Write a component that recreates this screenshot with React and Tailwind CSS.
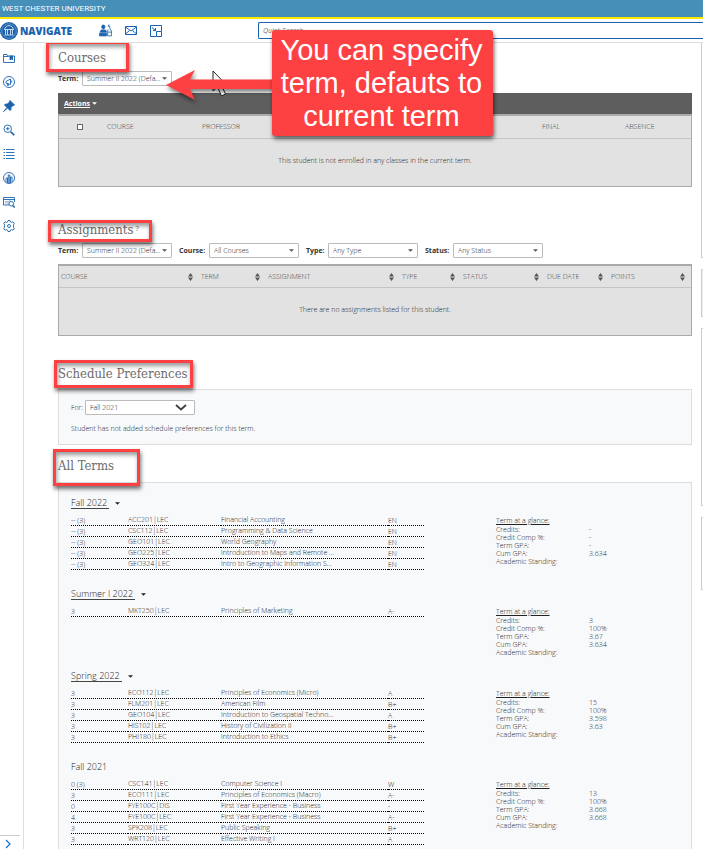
import React from 'react';
import clsx from 'clsx';

const terms = [
    {
        name: 'Fall 2022',
        menu: true,
        rows: [
            ['-- (3)', 'ACC201|LEC', 'Financial Accounting', 'EN'],
            ['-- (3)', 'CSC112|LEC', 'Programming & Data Science', 'EN'],
            ['-- (3)', 'GEO101|LEC', 'World Geography', 'EN'],
            ['-- (3)', 'GEO225|LEC', 'Introduction to Maps and Remote ...', 'EN'],
            ['-- (3)', 'GEO324|LEC', 'Intro to Geographic Information S...', 'EN'],
        ],
        glance: ['-', '-', '-', '3.634', ''],
    },
    {
        name: 'Summer I 2022',
        menu: true,
        rows: [['3', 'MKT250|LEC', 'Principles of Marketing', 'A-']],
        glance: ['3', '100%', '3.67', '3.634', ''],
    },
    {
        name: 'Spring 2022',
        menu: true,
        rows: [
            ['3', 'ECO112|LEC', 'Principles of Economics (Micro)', 'A'],
            ['3', 'FLM201|LEC', 'American Film', 'B+'],
            ['3', 'GEO104|LEC', 'Introduction to Geospatial Techno...', 'A'],
            ['3', 'HIS102|LEC', 'History of Civilization II', 'B+'],
            ['3', 'PHI180|LEC', 'Introduction to Ethics', 'B+'],
        ],
        glance: ['15', '100%', '3.598', '3.63', ''],
    },
    {
        name: 'Fall 2021',
        menu: false,
        rows: [
            ['0 (3)', 'CSC141|LEC', 'Computer Science I', 'W'],
            ['3', 'ECO111|LEC', 'Principles of Economics (Macro)', 'A-'],
            ['0', 'FYE100C|DIS', 'First Year Experience - Business', '-'],
            ['4', 'FYE100C|LEC', 'First Year Experience - Business', 'A-'],
            ['3', 'SPK208|LEC', 'Public Speaking', 'B+'],
            ['3', 'WRT120|LEC', 'Effective Writing I', 'A'],
        ],
        glance: ['13', '100%', '3.668', '3.668', ''],
    },
];

const glanceLabels = ['Credits:', 'Credit Comp %:', 'Term GPA:', 'Cum GPA:', 'Academic Standing:'];

const assignmentColumns = [
    ['COURSE', 'w-[140px]'],
    ['TERM', 'w-[67px]'],
    ['ASSIGNMENT', 'w-[134px]'],
    ['TYPE', 'w-[61px]'],
    ['STATUS', 'w-[84px]'],
    ['DUE DATE', 'w-[64px]'],
    ['POINTS', ''],
];

const navItems = [
    {
        label: 'Cases',
        icon: (
            <>
                <path d="M1 21V5h7l2 3h13v13z" />
                <path d="M1 9h10" />
                <path d="M14 8v8l2.500-2.500L19 16V8z" fill="currentColor" />
            </>
        ),
    },
    {
        label: 'Campaigns',
        icon: (
            <>
                <circle cx="12" cy="12" r="11" />
                <path d="M6 11l9-5v11l-9-3zM8 15l1 4h2l-1-4M17.500 9v4" />
            </>
        ),
    },
    {
        label: 'Pinned',
        icon: <path d="M14 1l9 9-3 1-4 4v4l-2 2-5-5-8 7 7-8-5-5 2-2h4l4-4z" fill="currentColor" />,
    },
    {
        label: 'Advanced search',
        icon: (
            <>
                <circle cx="9.500" cy="9.500" r="7.500" />
                <path d="M6 9.500h7M9.500 6v7" />
                <path d="M15.500 15.500l7 7" strokeWidth="3.500" />
            </>
        ),
    },
    {
        label: 'Lists',
        icon: <path d="M1 3h3M1 9h3M1 15h3M1 21h3M6 3h17M6 9h17M6 15h17M6 21h17" />,
    },
    {
        label: 'Reports',
        icon: (
            <>
                <circle cx="12" cy="12" r="11" />
                <path d="M6 20v-8h3v10M10.500 22V6h3v16M15 22V10h3v10" />
            </>
        ),
    },
    {
        label: 'Analytics',
        icon: (
            <>
                <path d="M12 18H1V3h22v9M1 7h22M5 11h2M9 11h2M5 14h2M9 14h2M13 10h2" />
                <circle cx="16.500" cy="15.500" r="4.500" />
                <path d="M19.500 19l4 4" strokeWidth="3" />
            </>
        ),
    },
    {
        label: 'Settings',
        icon: (
            <>
                <path d="M10 1h4l1 3 2 1 3-1.500 2.500 3L21 9.500V12v2.500l1.500 3-2.500 3-3-1.500-2 1-1 3h-4l-1-3-2-1-3 1.500-2.500-3L3 14.500v-5L1.500 6.500 4 3.500 7 5l2-1z" />
                <circle cx="12" cy="12" r="3" />
            </>
        ),
    },
];

const Caret = () => (
    <svg viewBox="0 0 6 3" className="w-[5px] h-[3px] shrink-0" fill="currentColor" aria-hidden="true">
        <path d="M0 0h6L3 3z" />
    </svg>
);

const SortIcon = () => (
    <svg viewBox="0 0 5 8" className="w-[5px] h-2 shrink-0 text-[#555]" fill="currentColor" aria-hidden="true">
        <path d="M2.500 0L5 3.500H0zM0 4.500h5L2.500 8z" />
    </svg>
);

const Filter = ({ id, label, value, className }) => (
    <div className="flex items-center">
        <label htmlFor={id} className={clsx('font-bold text-[#333]', className)}>{label}</label>
        <div className="relative w-[90px]">
            <select
                id={id}
                className="block appearance-none w-full h-[15px] pl-1 pr-2.5 border border-[#bbb] rounded-[1px] bg-white text-[#222]"
            >
                <option>{value}</option>
            </select>
            <span className="absolute right-[5px] top-1.5 text-[#555] pointer-events-none"><Caret /></span>
        </div>
    </div>
);

// Heading with the red highlight frame laid over it
const Heading = ({ children, frame }) => (
    <h2 className="relative z-10 font-['DejaVu_Serif_Condensed','DejaVu_Serif',serif] text-[13px] leading-[18px] font-normal text-[#6c6c6c]">
        {children}
        <span
            className={clsx(
                'absolute border-[3px] border-[#fd4142] shadow-[1px_3px_4px_rgba(0,0,0,0.55),inset_1px_3px_4px_rgba(0,0,0,0.4)] pointer-events-none',
                frame
            )}
        />
    </h2>
);

const Term = ({ term }) => (
    <section className="mb-[13px]">
        <h3 className="flex items-center h-3 text-[9px] leading-3">
            {term.menu ? (
                <button type="button" className="flex items-center gap-1.5">
                    <span className="border-b border-[#444] leading-[11px] pr-0.5">{term.name}</span>
                    <Caret />
                </button>
            ) : (
                term.name
            )}
        </h3>
        <div className="flex items-start gap-[72px] mt-1.5">
            <table className="table-fixed w-[353px] mb-[5px] border-separate border-spacing-0 leading-[9px]">
                <tbody>
                    {term.rows.map(([credits, course, title, grade]) => (
                        <tr key={course} className="h-[11px]">
                            <td className="w-[57px] p-0 border-b border-dotted border-black align-bottom">{credits}</td>
                            <td className="w-[93px] p-0 border-b border-dotted border-black align-top">{course}</td>
                            <td className="p-0 border-b border-dotted border-black align-top whitespace-nowrap">{title}</td>
                            <td className="w-[36px] p-0 border-b border-dotted border-black align-bottom">{grade}</td>
                        </tr>
                    ))}
                </tbody>
            </table>
            <div className="pt-px leading-2">
                <p className="leading-[10px] underline">Term at a glance:</p>
                <dl>
                    {glanceLabels.map((label, i) => (
                        <div key={label} className="flex h-2">
                            <dt className="w-[93px]">{label}</dt>
                            <dd>{term.glance[i]}</dd>
                        </div>
                    ))}
                </dl>
            </div>
        </div>
    </section>
);

const Header = () => (
    <header className="shrink-0">
        <div className="h-[19px] bg-[#458fb8] border-b-2 border-[#ffe900] pl-0.5 font-['Roboto',sans-serif] font-normal text-[8px] leading-[18px] text-white">
            WEST CHESTER UNIVERSITY
        </div>
        <div className="flex items-center h-6 border-b border-[#ddd] text-[#1b62ae]">
            <a href="#home" className="flex items-center gap-0.5 w-[99px]">
                <svg viewBox="0 0 36 36" className="w-[18px] h-[18px]" aria-hidden="true">
                    <circle cx="18" cy="18" r="18" fill="#1b62ae" />
                    <circle cx="18" cy="18" r="14.500" fill="none" stroke="#8fb5dc" strokeWidth="1" />
                    <path d="M9 15c1-5 5-7 9-8 4 1 8 3 9 8zM9 26h18M11 16v9M15 16v9M21 16v9M25 16v9" fill="none" stroke="#fff" strokeWidth="1.500" />
                </svg>
                <span className="text-[10px] leading-3 font-extrabold">NAVIGATE</span>
            </a>
            <div className="flex items-center gap-[13px]">
                <button type="button" aria-label="Students">
                    <svg viewBox="0 0 24 24" className="w-[13px] h-[13px]" fill="none" stroke="currentColor" strokeWidth="1.500">
                        <path d="M8 2c2 0 3 1 3 3s-1 4-3 4-3-2-3-4 1-3 3-3zM4 11h8l2 4H2z" fill="currentColor" />
                        <path d="M1 17h13v5H1z" fill="currentColor" />
                        <path d="M18 1v3M16 4h4v4l3 5v9h-7v-9l1-3" />
                        <path d="M16 15h7" />
                    </svg>
                </button>
                <button type="button" aria-label="Messages">
                    <svg viewBox="0 0 24 18" className="w-3 h-[9px]" fill="none" stroke="currentColor" strokeWidth="2">
                        <path d="M1 1h22v16H1zM1 2l11 8 11-8M1 16l8-7M23 16l-8-7" />
                    </svg>
                </button>
                <button type="button" aria-label="Quick links">
                    <svg viewBox="0 0 24 24" className="w-3 h-3" fill="none" stroke="currentColor" strokeWidth="2">
                        <path d="M12 23H1V1h22v11M13 13h10v10H13zM4 5l7 6M11 6v5H6" />
                    </svg>
                </button>
            </div>
            <input
                type="search"
                aria-label="Quick Search"
                placeholder="Quick Search"
                className="flex-1 min-w-0 ml-24 h-[17px] px-1 border border-r-0 border-[#1b62ae] rounded-l-[2px] font-normal italic text-[7px] text-[#666] placeholder:text-[#777]"
            />
        </div>
    </header>
);

const Sidebar = () => (
    <nav className="flex flex-col w-6 shrink-0 border-r border-[#ddd] pt-[3px] text-[#1b62ae]">
        {navItems.map((item) => (
            <a key={item.label} href="#nav" aria-label={item.label} className="flex items-center h-6 pl-[3px]">
                <svg viewBox="0 0 24 24" className="w-3 h-3" fill="none" stroke="currentColor" strokeWidth="1.800">
                    {item.icon}
                </svg>
            </a>
        ))}
        <button type="button" aria-label="Expand menu" className="mt-auto mr-[3px] h-[14px] border-t border-[#ccc] pl-[5px] pt-0.5">
            <svg viewBox="0 0 12 20" className="w-1.5 h-2.5" fill="none" stroke="#1b6fd0" strokeWidth="2.500">
                <path d="M2 2l8 8-8 8" />
            </svg>
        </button>
    </nav>
);

const App = () => {
    return (
        <div className="relative flex flex-col h-screen overflow-hidden bg-white font-['Open_Sans',sans-serif] font-light text-[7px] leading-[10px] text-[#222]">
            <Header />
            <div className="flex flex-1 min-h-0">
                <Sidebar />
                <main className="flex-1 min-w-0 overflow-hidden pl-[34px] pt-1.5">
                    <Heading frame="-left-3 -top-2 w-[83px] h-[31px]">Courses</Heading>
                    <div className="flex mt-1">
                        <Filter id="course-term" label="Term:" value="Summer II 2022 (Defa..." className="w-6" />
                    </div>
                    <div className="mt-[7px] h-[21px] bg-[#5e5e5e] px-1.5 flex items-center">
                        <button type="button" className="flex items-center gap-0.5 font-bold text-white">
                            <span className="underline">Actions</span>
                            <Caret />
                        </button>
                    </div>
                    <table className="table-fixed w-full border-separate border-spacing-0 border border-t-2 border-[#aaa] bg-[#e2e2e2]">
                        <thead>
                            <tr className="h-[23px] text-left text-[#444]">
                                <th className="w-12 p-0 pl-[18px] border-b border-[#c4c4c4]">
                                    <input type="checkbox" aria-label="Select all" className="block appearance-none w-1.5 h-1.5 border border-[#666] bg-white" />
                                </th>
                                <th className="w-[95px] p-0 border-b border-[#c4c4c4] font-light">COURSE</th>
                                <th className="p-0 border-b border-[#c4c4c4] font-light">PROFESSOR</th>
                                <th className="w-[83px] p-0 border-b border-[#c4c4c4] font-light">FINAL</th>
                                <th className="w-[66px] p-0 border-b border-[#c4c4c4] font-light">ABSENCE</th>
                            </tr>
                        </thead>
                        <tbody>
                            <tr className="h-[47px]">
                                <td colSpan={5} className="p-0 pb-1 text-center">
                                    This student is not enrolled in any classes in the current term.
                                </td>
                            </tr>
                        </tbody>
                    </table>

                    <div className="mt-[34px]">
                        <Heading frame="-left-[10px] -top-px w-[104px] h-[22px]">
                            Assignments<sup className="pl-0.5 text-[7px] leading-none">?</sup>
                        </Heading>
                    </div>
                    <div className="flex gap-[7px] mt-1">
                        <Filter id="a-term" label="Term:" value="Summer II 2022 (Defa..." className="w-6" />
                        <Filter id="a-course" label="Course:" value="All Courses" className="w-[30px]" />
                        <Filter id="a-type" label="Type:" value="Any Type" className="w-[22px]" />
                        <Filter id="a-status" label="Status:" value="Any Status" className="w-7" />
                    </div>
                    <table className="table-fixed w-full mt-1.5 border-separate border-spacing-0 border border-t-2 border-[#aaa] bg-[#e2e2e2]">
                        <thead>
                            <tr className="h-[22px] text-left text-[#444]">
                                {assignmentColumns.map(([name, width]) => (
                                    <th key={name} className={clsx('p-0 pl-0.5 pr-1.5 border-b border-[#c4c4c4] font-light', width)}>
                                        <button type="button" className="flex items-center justify-between w-full">
                                            {name}
                                            <SortIcon />
                                        </button>
                                    </th>
                                ))}
                            </tr>
                        </thead>
                        <tbody>
                            <tr className="h-[47px]">
                                <td colSpan={7} className="p-0 pb-1 text-center">
                                    There are no assignments listed for this student.
                                </td>
                            </tr>
                        </tbody>
                    </table>

                    <div className="mt-[29px]">
                        <Heading frame="-left-1 -top-[5px] w-[139px] h-7">Schedule Preferences</Heading>
                    </div>
                    <div className="mt-1.5 h-14 px-3 pt-2.5 border border-[#ddd] bg-[#f8f9fb]">
                        <div className="flex items-center">
                            <label htmlFor="pref-term" className="w-[14px]">For:</label>
                            <div className="relative w-[110px]">
                                <select
                                    id="pref-term"
                                    className="block appearance-none w-full h-[15px] pl-1 border border-[#bbb] rounded-[1px] bg-white text-[#222]"
                                >
                                    <option>Fall 2021</option>
                                </select>
                                <svg viewBox="0 0 12 7" className="absolute right-2 top-1 w-3 h-[7px] pointer-events-none" fill="none" stroke="#444" strokeWidth="2">
                                    <path d="M1 1l5 4.500L11 1" />
                                </svg>
                            </div>
                        </div>
                        <p className="mt-[9px]">Student has not added schedule preferences for this term.</p>
                    </div>

                    <div className="mt-3">
                        <Heading frame="-left-[5px] -top-2 w-[87px] h-[37px]">All Terms</Heading>
                    </div>
                    <div className="mt-[7px] px-3 pt-[14px] pb-2 border border-[#ddd] bg-[#f8f9fb]">
                        {terms.map((term) => (
                            <Term key={term.name} term={term} />
                        ))}
                    </div>
                </main>

                <aside className="flex flex-col shrink-0 gap-[11px] w-[11px] pl-[9px]">
                    <div className="h-[215px] border-y border-l border-[#ccc] border-t-0" />
                    <div className="h-12 border-y border-l border-[#ccc] bg-[#eee]" />
                    <div className="h-[178px] border-y border-l border-[#ccc]" />
                    <div className="h-[73px] border-y border-l border-[#ccc]" />
                </aside>
            </div>

            {/* Pointer, arrow and callout float above the page */}
            <svg viewBox="0 0 16 27" className="absolute z-10 left-[212px] top-[70px] w-4 h-[27px]" fill="#fff" stroke="#222" strokeWidth="1">
                <path d="M1 1v20l4.500-4 4 9 4-2-4-8.500H15z" />
            </svg>
            <svg
                viewBox="0 0 110 34"
                className="absolute z-10 left-[165px] top-[69px] w-[110px] h-[34px] overflow-visible drop-shadow-[1px_3px_2px_rgba(0,0,0,0.5)]"
                fill="#fd4142"
            >
                <path d="M1 16L30 1l-5 9.500h85v9.500H25l5 11z" />
            </svg>
            <div className="absolute z-20 left-[272px] top-[30px] w-[221px] pt-1 pb-[3px] pr-0.5 rounded-[3px] bg-[#fd4142] shadow-[1px_3px_4px_rgba(0,0,0,0.6)] font-['Liberation_Sans',sans-serif] font-normal text-[29px] leading-[33px] text-center text-white">
                You can specify term, defauts to current term
            </div>
        </div>
    );
};

export default App;
